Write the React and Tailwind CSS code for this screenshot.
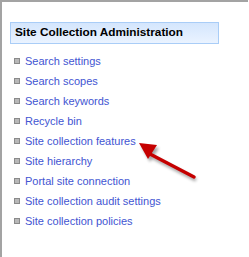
import React from 'react';

const LINKS = [
  'Search settings',
  'Search scopes',
  'Search keywords',
  'Recycle bin',
  'Site collection features',
  'Site hierarchy',
  'Portal site connection',
  'Site collection audit settings',
  'Site collection policies',
];

export default function App() {
  return (
    <div className="relative w-[248px] h-[257px] bg-white border-t-2 border-l-2 border-[#a3a3a3] pl-2 pt-5 font-['Liberation_Sans',Arial,sans-serif] text-[11px]">
      {/* section header */}
      <div className="w-[209px] h-[22px] flex items-center px-1 border border-[#a9cdf7] bg-gradient-to-b from-[#d4e6fd] to-[#eaf3ff]">
        <span className="font-bold text-black text-[11.8px]">Site Collection Administration</span>
      </div>

      {/* links */}
      <ul className="mt-[7px] flex flex-col">
        {LINKS.map((label) => (
          <li key={label} className="h-5 flex items-center pl-[5px] gap-[6px]">
            <span className="w-[4px] h-[4px] bg-[#b8b8b8] outline outline-1 outline-[#8a8a8a] shrink-0" />
            <span className="text-[#4255d2] leading-5">{label}</span>
          </li>
        ))}
      </ul>

      {/* annotation arrow */}
      <svg className="absolute left-0 top-0 pointer-events-none" width="249" height="257" viewBox="0 0 249 257">
        <defs>
          <filter id="sh" x="-20%" y="-20%" width="140%" height="140%">
            <feGaussianBlur stdDeviation="1.5" />
          </filter>
        </defs>
        <g transform="translate(2 3)" fill="#000" opacity="0.35" filter="url(#sh)">
          <line x1="148" y1="152" x2="192" y2="175" stroke="#000" strokeWidth="3.5" />
          <polygon points="137,141 155,143 146,157" />
        </g>
        <line x1="148" y1="152" x2="192" y2="175" stroke="#c50000" strokeWidth="3.5" strokeLinecap="round" />
        <polygon points="137,141 155,143 146,157" fill="#c50000" />
      </svg>
    </div>
  );
}
